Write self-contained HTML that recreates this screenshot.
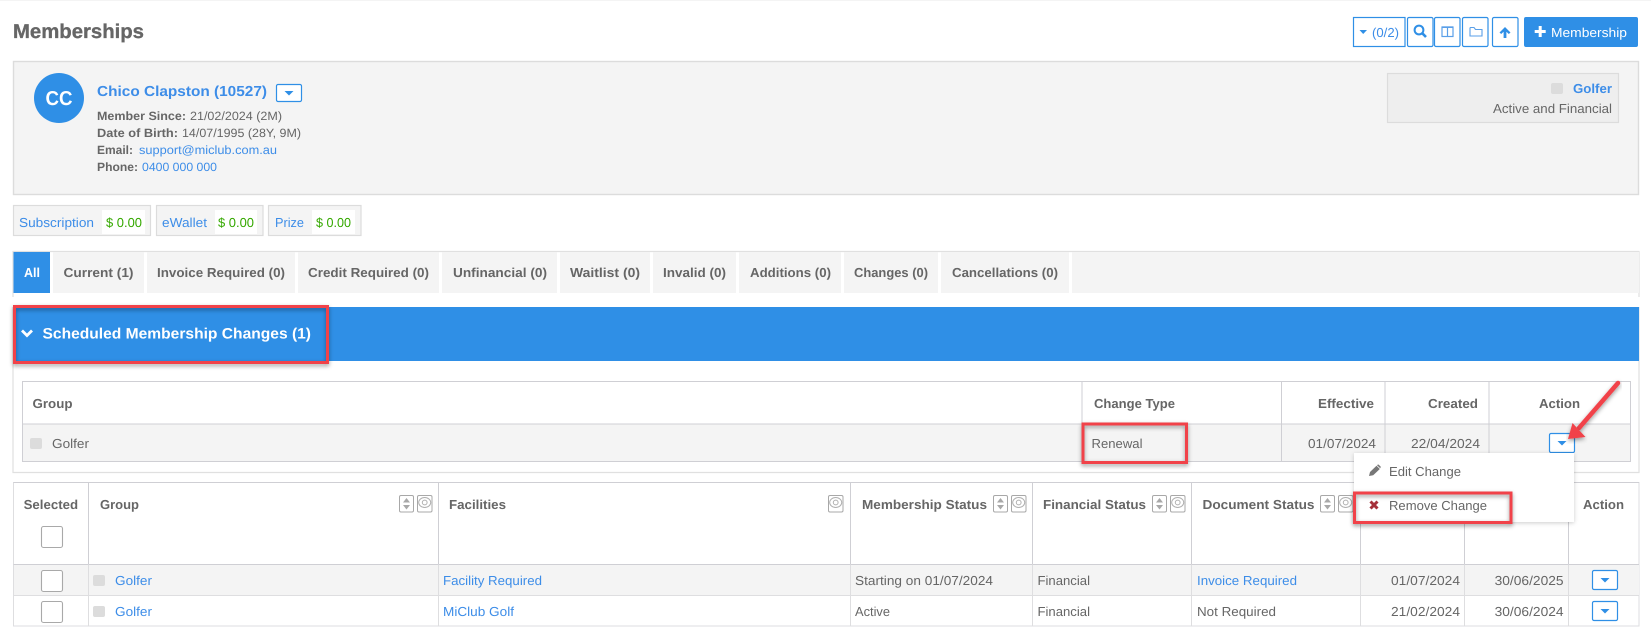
<!DOCTYPE html>
<html><head><meta charset="utf-8"><title>Memberships</title>
<style>
html,body{margin:0;padding:0;background:#fff;width:1651px;height:639px;overflow:hidden}
svg{display:block}
text{font-family:"Liberation Sans",sans-serif;font-size:13px;fill:#666}
.b{font-weight:bold;fill:#666}
.l{fill:#3d8de8}
.g{fill:#35a800}
.s{font-size:12px}
.w{fill:#fff;font-weight:bold}
.btn{fill:#fff;stroke:#2f8fe6;stroke-width:1.2}
.ln{stroke:#cfcfd4;stroke-width:1}
.ln2{stroke:#dedee0;stroke-width:1}
.chip{fill:#dcdcdc}
.cb{fill:#fff;stroke:#a9a9a9;stroke-width:1.1}
.ib{fill:#fff;stroke:#a8a8a8;stroke-width:1}
.red{fill:none;stroke:#f1434a;stroke-width:3;filter:url(#sh)}
</style></head><body>
<svg width="1651" height="639" viewBox="0 0 1651 639" xmlns="http://www.w3.org/2000/svg" text-rendering="geometricPrecision">
<defs>
<filter id="sh" x="-10%" y="-30%" width="120%" height="160%"><feDropShadow dx="0" dy="2" stdDeviation="2" flood-color="#000" flood-opacity=".4"/></filter>
<filter id="sh2" x="-10%" y="-10%" width="120%" height="120%"><feDropShadow dx="0" dy="1" stdDeviation="2" flood-color="#000" flood-opacity=".2"/></filter>
<g id="car"><path d="M-4.5-2H4.5L0 2.5Z" fill="#2f8fe6"/></g>
<g id="sort"><rect x=".5" y=".5" width="14" height="16.5" rx="1.5" class="ib"/><path d="M7.5 3 11 7.5H4ZM7.5 14.5 11 10H4Z" fill="#a8a8a8"/></g>
<g id="eye"><rect x=".5" y=".5" width="14.5" height="16.5" rx="1.5" class="ib"/><ellipse cx="7.7" cy="7.5" rx="6" ry="5" fill="none" stroke="#b0b0b0"/><circle cx="7.7" cy="7.5" r="2.4" fill="none" stroke="#b0b0b0"/></g>
</defs>

<rect x="0" y="0" width="1651" height="1" fill="#f4f4f4"/>
<text x="13" y="38" class="b" style="font-size:20px;stroke:#666;stroke-width:.35" textLength="131" lengthAdjust="spacingAndGlyphs">Memberships</text>

<rect x="1353.5" y="17.5" width="51.5" height="29" class="btn"/>
<path d="M1359.5 30H1367L1363.2 34Z" fill="#2f8fe6"/>
<text x="1372" y="37" class="l" textLength="27" lengthAdjust="spacingAndGlyphs">(0/2)</text>
<rect x="1407.5" y="17.5" width="25.5" height="29" rx="1.5" class="btn"/>
<circle cx="1419" cy="30" r="4.4" fill="none" stroke="#2f8fe6" stroke-width="2"/><path d="M1422.2 33.2 1426 37" stroke="#2f8fe6" stroke-width="2.6"/>
<rect x="1434.5" y="17.5" width="25.5" height="29" rx="1.5" class="btn"/>
<rect x="1442" y="27" width="11" height="9.5" fill="none" stroke="#5a9fe8" stroke-width="1.2"/><path d="M1447.5 27V36.5" stroke="#5a9fe8" stroke-width="1.2"/><path d="M1442 27.2H1453" stroke="#5a9fe8" stroke-width="1.6"/>
<rect x="1462.5" y="17.5" width="25.5" height="29" rx="1.5" class="btn"/>
<path d="M1470 28V36H1482V29.5H1475.5L1474 27.5H1470.5Z" fill="none" stroke="#5a9fe8" stroke-width="1.1"/>
<rect x="1492.5" y="17.5" width="25.5" height="29" rx="1.5" class="btn"/>
<path d="M1505 27 1510.5 32.5 1508.8 34 1506.4 31.7V38H1503.6V31.7L1501.2 34 1499.5 32.5Z" fill="#2f8fe6"/>
<rect x="1524" y="17" width="114" height="30" rx="2" fill="#2f8fe6"/>
<path d="M1538.7 26H1541.7V30H1545.7V33H1541.7V37H1538.7V33H1534.7V30H1538.7Z" fill="#fff"/>
<text x="1551" y="37" style="fill:#fff" textLength="76" lengthAdjust="spacingAndGlyphs">Membership</text>

<rect x="13.5" y="61.5" width="1625" height="133" fill="#f4f4f4" stroke="#dcdcdc" stroke-width="1.4"/>
<circle cx="59" cy="98" r="25" fill="#2f8fe6"/>
<text x="45.5" y="105" style="fill:#fff;font-size:20px;font-weight:bold" textLength="27" lengthAdjust="spacingAndGlyphs">CC</text>
<text x="97" y="96" class="b l" style="font-size:14.5px;fill:#3d8de8" textLength="170" lengthAdjust="spacingAndGlyphs">Chico Clapston (10527)</text>
<rect x="276.5" y="84.5" width="25" height="17" rx="1.5" class="btn"/><use href="#car" x="289" y="93"/>
<text x="97" y="120" class="b s" textLength="89" lengthAdjust="spacingAndGlyphs">Member Since:</text>
<text x="190" y="120" class="s" textLength="92" lengthAdjust="spacingAndGlyphs">21/02/2024 (2M)</text>
<text x="97" y="137" class="b s" textLength="81" lengthAdjust="spacingAndGlyphs">Date of Birth:</text>
<text x="182" y="137" class="s" textLength="119" lengthAdjust="spacingAndGlyphs">14/07/1995 (28Y, 9M)</text>
<text x="97" y="154" class="b s" textLength="36" lengthAdjust="spacingAndGlyphs">Email:</text>
<text x="139" y="154" class="s l" textLength="138" lengthAdjust="spacingAndGlyphs">support@miclub.com.au</text>
<text x="97" y="171" class="b s" textLength="41" lengthAdjust="spacingAndGlyphs">Phone:</text>
<text x="142" y="171" class="s l" textLength="75" lengthAdjust="spacingAndGlyphs">0400 000 000</text>

<rect x="1387.5" y="73.5" width="231" height="49" fill="#eee" stroke="#dcdcdc" stroke-width="1.2"/>
<rect x="1551" y="83" width="12" height="11" rx="2" class="chip"/>
<text x="1573" y="93" class="b" style="fill:#3d8de8" textLength="39" lengthAdjust="spacingAndGlyphs">Golfer</text>
<text x="1493" y="113" textLength="119" lengthAdjust="spacingAndGlyphs">Active and Financial</text>

<g fill="#f4f4f4" stroke="#dcdcdc" stroke-width="1.2">
<rect x="13.5" y="205.5" width="137" height="30"/>
<rect x="156.5" y="205.5" width="106.5" height="30"/>
<rect x="268.5" y="205.5" width="92.5" height="30"/>
</g>
<rect x="102" y="210" width="43" height="24" fill="#fff"/>
<rect x="215" y="210" width="42" height="24" fill="#fff"/>
<rect x="312" y="210" width="43" height="24" fill="#fff"/>
<text x="19" y="227" class="l" textLength="75" lengthAdjust="spacingAndGlyphs">Subscription</text>
<text x="106" y="227" class="g" textLength="36" lengthAdjust="spacingAndGlyphs">$ 0.00</text>
<text x="162" y="227" class="l" textLength="45" lengthAdjust="spacingAndGlyphs">eWallet</text>
<text x="218" y="227" class="g" textLength="36" lengthAdjust="spacingAndGlyphs">$ 0.00</text>
<text x="275" y="227" class="l" textLength="29" lengthAdjust="spacingAndGlyphs">Prize</text>
<text x="316" y="227" class="g" textLength="35" lengthAdjust="spacingAndGlyphs">$ 0.00</text>

<path d="M13 297V251.5H1639V297" fill="none" stroke="#e0e0e0" stroke-width="1.2"/>
<rect x="13.5" y="252" width="36.5" height="41" fill="#2f8fe6"/>
<g fill="#f4f4f4">
<rect x="53" y="252" width="91" height="41"/>
<rect x="147" y="252" width="148" height="41"/>
<rect x="298" y="252" width="141" height="41"/>
<rect x="442" y="252" width="115" height="41"/>
<rect x="560" y="252" width="90" height="41"/>
<rect x="653" y="252" width="83" height="41"/>
<rect x="739" y="252" width="102" height="41"/>
<rect x="844" y="252" width="94" height="41"/>
<rect x="941" y="252" width="128" height="41"/>
<rect x="1072" y="252" width="567" height="41"/>
</g>
<text x="24" y="277" class="w" textLength="16" lengthAdjust="spacingAndGlyphs">All</text>
<text x="63.5" y="277" class="b" textLength="70" lengthAdjust="spacingAndGlyphs">Current (1)</text>
<text x="157" y="277" class="b" textLength="128" lengthAdjust="spacingAndGlyphs">Invoice Required (0)</text>
<text x="308" y="277" class="b" textLength="121" lengthAdjust="spacingAndGlyphs">Credit Required (0)</text>
<text x="453" y="277" class="b" textLength="94" lengthAdjust="spacingAndGlyphs">Unfinancial (0)</text>
<text x="570" y="277" class="b" textLength="70" lengthAdjust="spacingAndGlyphs">Waitlist (0)</text>
<text x="663" y="277" class="b" textLength="63" lengthAdjust="spacingAndGlyphs">Invalid (0)</text>
<text x="750" y="277" class="b" textLength="81" lengthAdjust="spacingAndGlyphs">Additions (0)</text>
<text x="854" y="277" class="b" textLength="74" lengthAdjust="spacingAndGlyphs">Changes (0)</text>
<text x="952" y="277" class="b" textLength="106" lengthAdjust="spacingAndGlyphs">Cancellations (0)</text>

<path d="M13 307V472.5H1639V307" fill="none" stroke="#e0e0e0" stroke-width="1.2"/>
<rect x="13" y="307" width="1626" height="54" fill="#2f8fe6"/>
<path d="M22 330.5 27 335.5 32 330.5" fill="none" stroke="#fff" stroke-width="2.8"/>
<text x="42.5" y="338.5" class="w" style="font-size:15px" textLength="268.5" lengthAdjust="spacingAndGlyphs">Scheduled Membership Changes (1)</text>
<rect x="14.5" y="306.5" width="313" height="56" class="red"/>

<rect x="22.5" y="381.5" width="1608" height="80" fill="#fff" stroke="#cfcfd4" stroke-width="1"/>
<rect x="23" y="424" width="1607" height="37" fill="#f4f4f4"/>
<path d="M22.5 424H1630.5M1082 381.5V461.5M1281.5 381.5V461.5M1385 381.5V461.5M1489 381.5V461.5" class="ln"/>
<text x="32.5" y="408" class="b" textLength="40" lengthAdjust="spacingAndGlyphs">Group</text>
<text x="1094" y="408" class="b" textLength="81" lengthAdjust="spacingAndGlyphs">Change Type</text>
<text x="1318" y="408" class="b" textLength="56" lengthAdjust="spacingAndGlyphs">Effective</text>
<text x="1428" y="408" class="b" textLength="50" lengthAdjust="spacingAndGlyphs">Created</text>
<text x="1539" y="408" class="b" textLength="41" lengthAdjust="spacingAndGlyphs">Action</text>
<rect x="30" y="438" width="12" height="11" rx="2" class="chip"/>
<text x="52" y="448" textLength="37" lengthAdjust="spacingAndGlyphs">Golfer</text>
<text x="1091.5" y="448" textLength="51" lengthAdjust="spacingAndGlyphs">Renewal</text>
<text x="1308" y="448" textLength="68" lengthAdjust="spacingAndGlyphs">01/07/2024</text>
<text x="1411" y="448" textLength="69" lengthAdjust="spacingAndGlyphs">22/04/2024</text>
<rect x="1083" y="424" width="103.5" height="38.5" class="red"/>

<rect x="13.5" y="482.5" width="1625.5" height="143.5" fill="#fff" stroke="#dedee0" stroke-width="1"/>
<rect x="14" y="565" width="1625" height="30.5" fill="#f4f4f4"/>
<path d="M13.5 482.5H1639M13.5 564.5H1639" class="ln"/>
<path d="M14 595.5H1639" class="ln2"/>
<path d="M88.5 482.5V564.5M438.5 482.5V564.5M850.5 482.5V564.5M1032.5 482.5V564.5M1191.5 482.5V564.5M1360.5 482.5V564.5M1464.5 482.5V564.5M1568.5 482.5V564.5" class="ln"/>
<path d="M88.5 564.5V626M438.5 564.5V626M850.5 564.5V626M1032.5 564.5V626M1191.5 564.5V626M1360.5 564.5V626M1464.5 564.5V626M1568.5 564.5V626" class="ln2"/>
<text x="23.6" y="509" class="b" textLength="54.5" lengthAdjust="spacingAndGlyphs">Selected</text>
<text x="100" y="509" class="b" textLength="39" lengthAdjust="spacingAndGlyphs">Group</text>
<text x="449" y="509" class="b" textLength="57" lengthAdjust="spacingAndGlyphs">Facilities</text>
<text x="862" y="509" class="b" textLength="125" lengthAdjust="spacingAndGlyphs">Membership Status</text>
<text x="1043" y="509" class="b" textLength="103" lengthAdjust="spacingAndGlyphs">Financial Status</text>
<text x="1202.5" y="509" class="b" textLength="112" lengthAdjust="spacingAndGlyphs">Document Status</text>
<text x="1583" y="509" class="b" textLength="41" lengthAdjust="spacingAndGlyphs">Action</text>
<use href="#sort" x="399" y="495"/><use href="#eye" x="417" y="495"/>
<use href="#eye" x="828" y="495"/>
<use href="#sort" x="993" y="495"/><use href="#eye" x="1011" y="495"/>
<use href="#sort" x="1152" y="495"/><use href="#eye" x="1170" y="495"/>
<use href="#sort" x="1320" y="495"/><use href="#eye" x="1338" y="495"/>
<rect x="41.5" y="526.5" width="21" height="21" rx="2" class="cb"/>
<rect x="41.5" y="570.5" width="21" height="21" rx="2" class="cb"/>
<rect x="41.5" y="601.5" width="21" height="21" rx="2" class="cb"/>
<rect x="93" y="575" width="12" height="11" rx="2" class="chip"/>
<rect x="93" y="606" width="12" height="11" rx="2" class="chip"/>
<text x="115" y="585" class="l" textLength="37" lengthAdjust="spacingAndGlyphs">Golfer</text>
<text x="115" y="616" class="l" textLength="37" lengthAdjust="spacingAndGlyphs">Golfer</text>
<text x="443" y="585" class="l" textLength="99" lengthAdjust="spacingAndGlyphs">Facility Required</text>
<text x="443" y="616" class="l" textLength="71" lengthAdjust="spacingAndGlyphs">MiClub Golf</text>
<text x="855" y="585" textLength="138" lengthAdjust="spacingAndGlyphs">Starting on 01/07/2024</text>
<text x="855" y="616" textLength="35" lengthAdjust="spacingAndGlyphs">Active</text>
<text x="1037.5" y="585" textLength="52.5" lengthAdjust="spacingAndGlyphs">Financial</text>
<text x="1037.5" y="616" textLength="52.5" lengthAdjust="spacingAndGlyphs">Financial</text>
<text x="1197" y="585" class="l" textLength="100" lengthAdjust="spacingAndGlyphs">Invoice Required</text>
<text x="1197" y="616" textLength="79" lengthAdjust="spacingAndGlyphs">Not Required</text>
<text x="1391" y="585" textLength="69" lengthAdjust="spacingAndGlyphs">01/07/2024</text>
<text x="1391" y="616" textLength="69" lengthAdjust="spacingAndGlyphs">21/02/2024</text>
<text x="1494.6" y="585" textLength="69" lengthAdjust="spacingAndGlyphs">30/06/2025</text>
<text x="1494.6" y="616" textLength="69" lengthAdjust="spacingAndGlyphs">30/06/2024</text>
<rect x="1592.5" y="570.5" width="25" height="19" rx="1.5" class="btn"/><use href="#car" x="1605" y="580"/>
<rect x="1592.5" y="601.5" width="25" height="19" rx="1.5" class="btn"/><use href="#car" x="1605" y="611"/>

<rect x="1549.5" y="433.5" width="25" height="19" rx="1.5" class="btn"/><use href="#car" x="1562" y="443"/>
<rect x="1354" y="453" width="220" height="69" fill="#fff" filter="url(#sh2)"/>
<path d="M1369 476 1370 472 1376.5 465.7 1379.8 469 1373.2 475.2ZM1377.5 464.8 1378.5 464.5 1380.8 466.8 1380.5 467.8 1380.2 468.2 1377 465.2Z" fill="#777"/>
<text x="1389" y="476" textLength="72" lengthAdjust="spacingAndGlyphs">Edit Change</text>
<path d="M1370.5 501.5 1377.5 508.5M1377.5 501.5 1370.5 508.5" stroke="#a5303a" stroke-width="3"/>
<text x="1389" y="510" textLength="98" lengthAdjust="spacingAndGlyphs">Remove Change</text>
<rect x="1354.5" y="493" width="156.5" height="29.5" class="red"/>

<path d="M1618 383 1579 428" stroke="#f1434a" stroke-width="4.5" stroke-linecap="round" filter="url(#sh)"/>
<path d="M1568 439 1572.5 423 1585.5 437Z" fill="#f1434a" filter="url(#sh)"/>
</svg>
</body></html>
